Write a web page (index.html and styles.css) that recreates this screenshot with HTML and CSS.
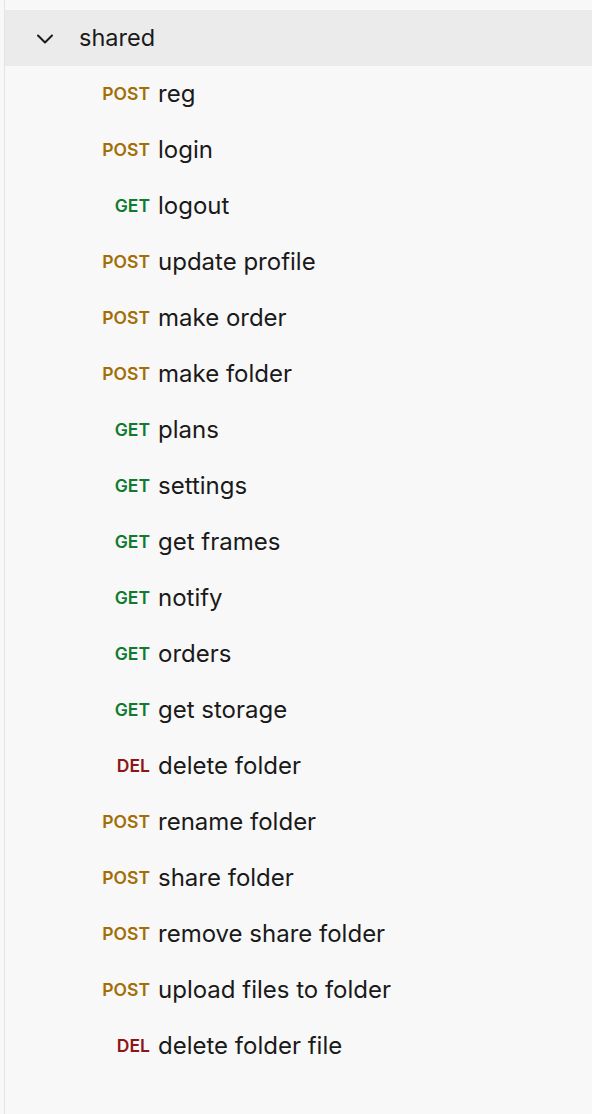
FILE: index.html
```html
<!DOCTYPE html>
<html>
<head>
<meta charset="utf-8">
<link rel="stylesheet" href="styles.css">
</head>
<body>
<div class="panel">
  <div class="folder">
    <svg class="chev" width="18" height="12" viewBox="0 0 18 12"><path d="M2 2.5 L9 9.5 L16 2.5" fill="none" stroke="#1a1a1a" stroke-width="2" stroke-linecap="round" stroke-linejoin="round"/></svg>
    <span class="folder-name">shared</span>
  </div>
  <ul class="list">
    <li class="item"><span class="m post">POST</span><span class="n">reg</span></li>
    <li class="item"><span class="m post">POST</span><span class="n">login</span></li>
    <li class="item"><span class="m get">GET</span><span class="n">logout</span></li>
    <li class="item"><span class="m post">POST</span><span class="n">update profile</span></li>
    <li class="item"><span class="m post">POST</span><span class="n">make order</span></li>
    <li class="item"><span class="m post">POST</span><span class="n">make folder</span></li>
    <li class="item"><span class="m get">GET</span><span class="n">plans</span></li>
    <li class="item"><span class="m get">GET</span><span class="n">settings</span></li>
    <li class="item"><span class="m get">GET</span><span class="n">get frames</span></li>
    <li class="item"><span class="m get">GET</span><span class="n">notify</span></li>
    <li class="item"><span class="m get">GET</span><span class="n">orders</span></li>
    <li class="item"><span class="m get">GET</span><span class="n">get storage</span></li>
    <li class="item"><span class="m del">DEL</span><span class="n">delete folder</span></li>
    <li class="item"><span class="m post">POST</span><span class="n">rename folder</span></li>
    <li class="item"><span class="m post">POST</span><span class="n">share folder</span></li>
    <li class="item"><span class="m post">POST</span><span class="n">remove share folder</span></li>
    <li class="item"><span class="m post">POST</span><span class="n">upload files to folder</span></li>
    <li class="item"><span class="m del">DEL</span><span class="n">delete folder file</span></li>
  </ul>
</div>
</body>
</html>
```
FILE: styles.css
```css
html, body {
  margin: 0;
  padding: 0;
  background: #f8f8f8;
  font-family: Inter, "Noto Sans", sans-serif;
  color: #1a1a1a;
}
.panel {
  margin-left: 4px;
  border-left: 1px solid #e4e4e4;
  padding-top: 10px;
  min-height: 1104px;
}
.folder {
  height: 56px;
  box-sizing: border-box;
  padding-bottom: 2px;
  background: #ebebeb;
  display: flex;
  align-items: center;
  padding-left: 31px;
}
.chev {
  display: block;
  margin-top: 3px;
}
.folder-name {
  margin-left: 25px;
  font-size: 23.5px;
}
.list {
  list-style: none;
  margin: 0;
  padding: 0;
}
.item {
  height: 56px;
  box-sizing: border-box;
  padding-bottom: 2px;
  display: flex;
  align-items: center;
  padding-left: 95px;
}
.m {
  width: 50px;
  text-align: right;
  font-size: 17.5px;
  font-weight: 600;
  margin-right: 8px;
}
.n {
  font-size: 24px;
}
.post { color: #a26e06; }
.get { color: #0f7a30; }
.del { color: #8c1515; }
```
